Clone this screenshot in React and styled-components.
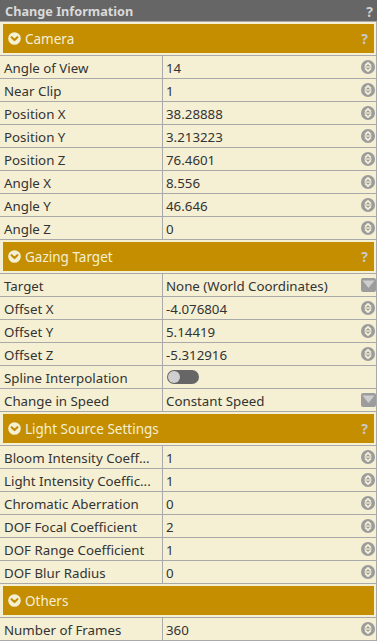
import React from "react";
import styled, { createGlobalStyle } from "styled-components";

const Global = createGlobalStyle`
  html, body { margin: 0; padding: 0; background: #f5f0d4; }
  body { font-family: "Noto Sans", "Open Sans", sans-serif; }
`;

const CREAM = "#f5f0d4";
const GOLD = "#c48e00";
const LINE = "#a9a9a9";

const Panel = styled.div`
  width: 377px;
  box-sizing: border-box;
  border-right: 1px solid ${LINE};
  background: ${CREAM};
  color: #333;
`;

const TitleBar = styled.div`
  height: 21px;
  background: #666666;
  color: #d9d9d9;
  font-weight: bold;
  font-size: 12.7px;
  display: flex;
  align-items: center;
  justify-content: space-between;
  padding: 1px 4px 0 5px;
  box-sizing: border-box;
  margin-right: -1px;
`;

const Help = styled.span`
  font-weight: bold;
  font-size: 14px;
  color: ${(p) => p.$color || "#cfcfcf"};
`;

const SectionCell = styled.div`
  border-top: 1px solid ${LINE};
  padding: 2px 2px 2px 3px;
`;

const SectionBar = styled.div`
  height: 29px;
  background: ${GOLD};
  display: flex;
  align-items: center;
  padding: 0 6px 0 5px;
  color: ${CREAM};
  font-size: 13.5px;
`;

const SectionTitle = styled.span`
  flex: 1;
  margin-left: 4px;
  padding-top: 1px;
`;

const Row = styled.div`
  display: grid;
  grid-template-columns: 162px 1fr;
  height: 23px;
  box-sizing: border-box;
  border-top: 1px solid ${LINE};
  ${(p) => (p.$last ? `border-bottom: 1px solid ${LINE}; height: 24px;` : "")}
  font-size: 13.3px;
`;

const Label = styled.div`
  padding: 1px 0 0 4px;
  display: flex;
  align-items: center;
  white-space: nowrap;
  overflow: hidden;
`;

const Value = styled.div`
  border-left: 1px solid ${LINE};
  padding: 0 0 0 3px;
  display: flex;
  align-items: center;
  justify-content: space-between;
  white-space: nowrap;
  overflow: hidden;
`;

const ValueText = styled.span`
  padding-top: 1px;
`;

const IconSlot = styled.span`
  display: flex;
  align-items: center;
  margin-right: ${(p) => p.$mr ?? 1}px;
`;

const Chevron = () => (
  <svg width="13" height="13" viewBox="0 0 13 13">
    <circle cx="6.5" cy="6.5" r="6.3" fill={CREAM} />
    <path d="M3.6 5.2 L6.5 8.1 L9.4 5.2" fill="none" stroke={GOLD} strokeWidth="2.1" strokeLinecap="round" strokeLinejoin="round" />
  </svg>
);

const Spinner = () => (
  <svg width="14" height="14" viewBox="0 0 14 14">
    <circle cx="7" cy="7" r="7" fill="#9c9c9c" />
    <path d="M4.1 5.6 L7 2.9 L9.9 5.6" fill="none" stroke={CREAM} strokeWidth="1.9" strokeLinejoin="round" />
    <path d="M3.4 7 H10.6" stroke={CREAM} strokeWidth="1.3" />
    <path d="M4.1 8.4 L7 11.1 L9.9 8.4" fill="none" stroke={CREAM} strokeWidth="1.9" strokeLinejoin="round" />
  </svg>
);

const SelectIcon = () => (
  <svg width="15" height="14" viewBox="0 0 15 14">
    <rect x="0" y="0" width="15" height="14" rx="2" fill="#9c9c9c" />
    <path d="M1.5 2.5 H13.5 L7.5 10 Z" fill="#cdcdcd" />
  </svg>
);

const Track = styled.span`
  display: inline-flex;
  align-items: center;
  width: 32px;
  height: 14px;
  border-radius: 7px;
  background: #666;
  padding: 0 1px;
  box-sizing: border-box;
  margin-left: 1px;
`;

const Knob = styled.span`
  width: 12px;
  height: 12px;
  border-radius: 50%;
  background: #cfcfcf;
`;

const sections = [
  {
    title: "Camera",
    rows: [
      ["Angle of View", "14", "spin"],
      ["Near Clip", "1", "spin"],
      ["Position X", "38.28888", "spin"],
      ["Position Y", "3.213223", "spin"],
      ["Position Z", "76.4601", "spin"],
      ["Angle X", "8.556", "spin"],
      ["Angle Y", "46.646", "spin"],
      ["Angle Z", "0", "spin"],
    ],
    help: true,
  },
  {
    title: "Gazing Target",
    rows: [
      ["Target", "None (World Coordinates)", "select"],
      ["Offset X", "-4.076804", "spin"],
      ["Offset Y", "5.14419", "spin"],
      ["Offset Z", "-5.312916", "spin"],
      ["Spline Interpolation", "", "toggle"],
      ["Change in Speed", "Constant Speed", "select"],
    ],
    help: true,
  },
  {
    title: "Light Source Settings",
    rows: [
      ["Bloom Intensity Coeff...", "1", "spin"],
      ["Light Intensity Coeffic...", "1", "spin"],
      ["Chromatic Aberration", "0", "spin"],
      ["DOF Focal Coefficient", "2", "spin"],
      ["DOF Range Coefficient", "1", "spin"],
      ["DOF Blur Radius", "0", "spin"],
    ],
    help: true,
  },
  {
    title: "Others",
    rows: [["Number of Frames", "360", "spin"]],
    help: false,
  },
];

export default function App() {
  return (
    <>
      <Global />
      <Panel>
        <TitleBar>
          <span>Change Information</span>
          <Help>?</Help>
        </TitleBar>
        {sections.map((s, si) => (
          <React.Fragment key={s.title}>
            <SectionCell>
              <SectionBar>
                <Chevron />
                <SectionTitle>{s.title}</SectionTitle>
                {s.help && <Help $color="#c9c9c9">?</Help>}
              </SectionBar>
            </SectionCell>
            {s.rows.map(([label, value, kind], ri) => {
              const last = si === sections.length - 1 && ri === s.rows.length - 1;
              return (
                <Row key={label} $last={last}>
                  <Label>{label}</Label>
                  <Value>
                    {kind === "toggle" ? (
                      <Track>
                        <Knob />
                      </Track>
                    ) : (
                      <ValueText>{value}</ValueText>
                    )}
                    {kind === "spin" && (
                      <IconSlot $mr={1}>
                        <Spinner />
                      </IconSlot>
                    )}
                    {kind === "select" && (
                      <IconSlot $mr={0}>
                        <SelectIcon />
                      </IconSlot>
                    )}
                  </Value>
                </Row>
              );
            })}
          </React.Fragment>
        ))}
      </Panel>
    </>
  );
}
